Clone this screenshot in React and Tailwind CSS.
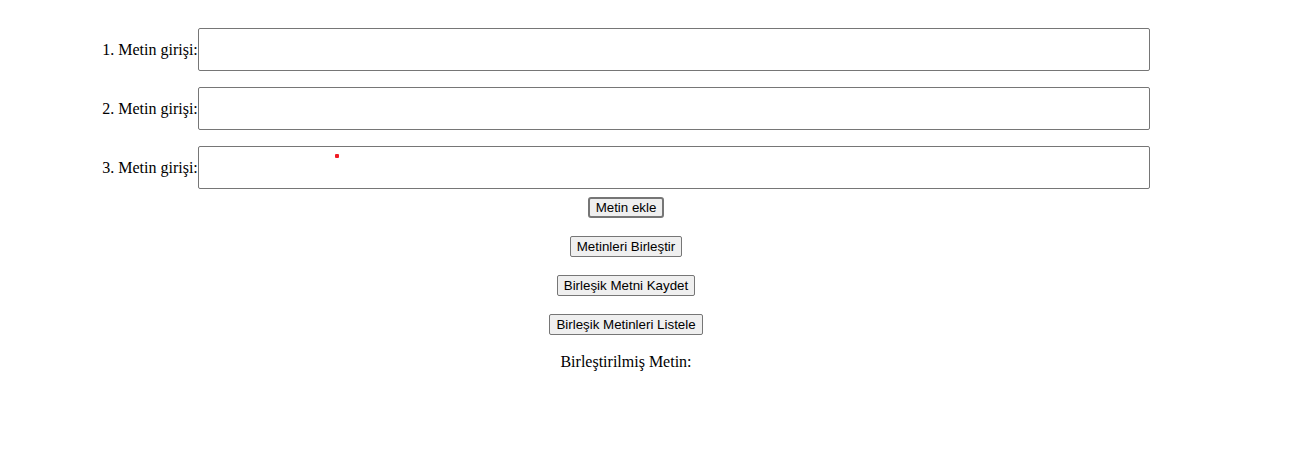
import React, { useState } from 'react';

function TextRow({ label, value, onChange, dot }) {
  return (
    <div className="flex items-center">
      <label className="text-[16px] leading-[18px] text-black">{label}</label>
      <div className="relative">
        <input
          type="text"
          value={value}
          onChange={(e) => onChange(e.target.value)}
          className="block w-[952px] h-[43px] border border-[#767676] rounded-[2px] bg-white px-[2px] text-[13.33px] outline-none"
        />
        {dot && <span className="absolute left-[137px] top-[8px] w-[4px] h-[4px] rounded-[1px] bg-[#f01c24]" />}
      </div>
    </div>
  );
}

export default function App() {
  const [texts, setTexts] = useState(['', '', '']);
  const [merged, setMerged] = useState('');

  const setText = (i, v) => {
    const next = [...texts];
    next[i] = v;
    setTexts(next);
  };

  const btn =
    'px-[6px] h-[21px] bg-[#efefef] border border-[#767676] rounded-[2px] text-[13.33px] leading-[15px] text-black font-["Liberation_Sans",Arial,sans-serif]';

  return (
    <div className="w-[1252px] pt-[28px] flex flex-col items-center bg-white font-['Liberation_Serif','Times_New_Roman',serif]">
      <div className="flex flex-col gap-[16px]">
        <TextRow label="1. Metin girişi:" value={texts[0]} onChange={(v) => setText(0, v)} />
        <TextRow label="2. Metin girişi:" value={texts[1]} onChange={(v) => setText(1, v)} />
        <TextRow label="3. Metin girişi:" value={texts[2]} onChange={(v) => setText(2, v)} dot />
      </div>

      <div className="mt-[8px] flex flex-col items-center gap-[18px]">
        <button className={btn + ' border-2 border-[#101010] rounded-[3px] px-[5px]'}>Metin ekle</button>
        <button className={btn} onClick={() => setMerged(texts.join(' '))}>Metinleri Birleştir</button>
        <button className={btn}>Birleşik Metni Kaydet</button>
        <button className={btn}>Birleşik Metinleri Listele</button>
      </div>

      <p className="mt-[18px] text-[16px] leading-[18px] text-black">Birleştirilmiş Metin:</p>
      {merged && <p className="mt-[4px] text-[16px]">{merged}</p>}
    </div>
  );
}
